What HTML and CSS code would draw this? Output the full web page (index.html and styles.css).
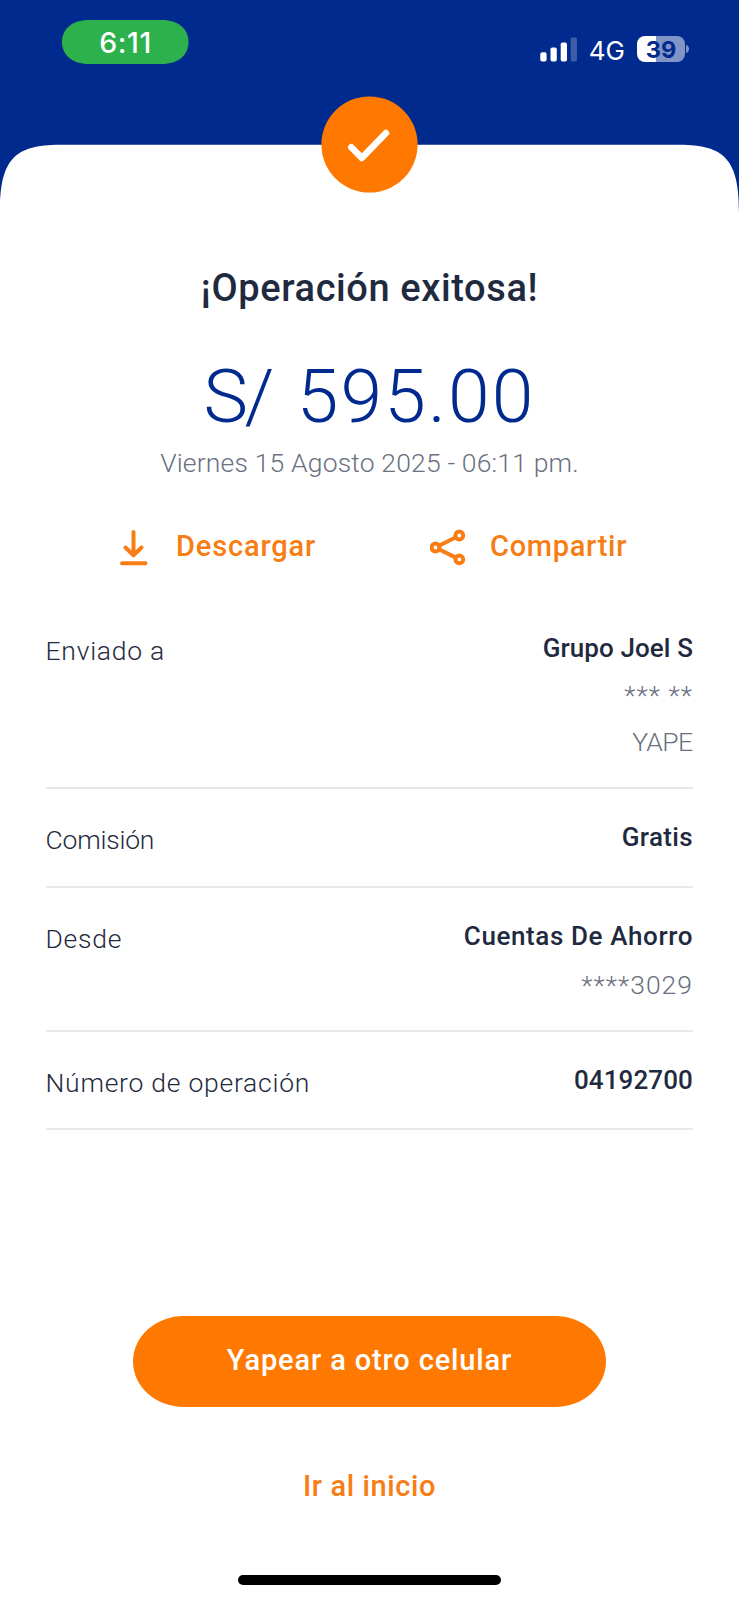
FILE: index.html
```
<!DOCTYPE html>
<html lang="es">
<head>
<meta charset="utf-8">
<title>Operación exitosa</title>
<link rel="stylesheet" href="styles.css">
</head>
<body>
<div class="screen">
  <header class="header">
    <svg class="header-shape" viewBox="0 0 739 216" aria-hidden="true">
      <path fill="#002a8d" d="M0 0H739V212C739 160 725 144.700 679 144.700H60C14 144.700 0 160 0 212Z"/>
    </svg>
    <div class="status">
      <svg class="pill" viewBox="0 0 127 44" aria-hidden="true"><path fill="#2db14c" d="M27 0H99.500C116.500 0 126.500 9 126.500 22S116.500 44 99.500 44H27C10 44 0 35 0 22S10 0 27 0Z"/></svg>
      <span class="time">6:11</span>
      <div class="indicators">
        <svg class="signal" viewBox="0 0 38 25" aria-hidden="true">
          <g fill="#fff"><rect x="0.300" y="15.300" width="6.300" height="9.200" rx="1.800"/><rect x="10.500" y="10.500" width="6.300" height="14" rx="1.800"/><rect x="20.700" y="5.500" width="6.300" height="19" rx="1.800"/></g>
          <rect x="30.700" y="0.500" width="6.300" height="24" rx="1.800" fill="#3d5da9"/>
        </svg>
        <span class="network">4G</span>
        <div class="battery"><span class="battery-body">39</span><svg class="battery-nub" viewBox="0 0 3 8" aria-hidden="true"><path fill="#7f94c6" d="M0 0C4 1 4 7 0 8Z"/></svg></div>
      </div>
    </div>
    <svg class="check" viewBox="0 0 97 97" aria-hidden="true">
      <circle cx="48.500" cy="48.500" r="48.100" fill="#ff7800"/>
      <path d="M30.300 51.300L40.800 62L65 37" fill="none" stroke="#fff" stroke-width="6.600" stroke-linecap="round" stroke-linejoin="round"/>
    </svg>
  </header>

  <main class="content">
    <h1 class="title">¡Operación exitosa!</h1>
    <p class="amount"><span class="currency">S</span>/ 595.00</p>
    <p class="date">Viernes 15 Agosto 2025 - 06:11 pm.</p>

    <div class="actions">
      <a class="action">
        <svg class="action-icon" viewBox="0 0 36 38" aria-hidden="true"><path d="M17.500 3V26M9.500 18.500L17.500 26.300L25.500 18.500M6 34.300H29.500" fill="none" stroke="#f77d14" stroke-width="4" stroke-linecap="round" stroke-linejoin="round"/></svg>
        <span class="descargar">Descargar</span>
      </a>
      <a class="action">
        <svg class="action-icon" viewBox="0 0 36 38" aria-hidden="true"><g fill="none" stroke="#f77d14" stroke-width="4"><circle cx="5.500" cy="18.500" r="3.900"/><circle cx="29.300" cy="6.500" r="3.900"/><circle cx="29.300" cy="30.300" r="3.900"/><path d="M9 16.700L25.800 8.300M9 20.200L25.800 28.600"/></g></svg>
        <span class="compartir">Compartir</span>
      </a>
    </div>

    <dl class="details">
      <div class="row">
        <dt class="label loose">Enviado a</dt>
        <dd class="values"><strong class="value">Grupo Joel S</strong><span class="sub stars">*** **</span><span class="sub bank">YAPE</span></dd>
      </div>
      <div class="row">
        <dt class="label">Comisión</dt>
        <dd class="values"><strong class="value gratis">Gratis</strong></dd>
      </div>
      <div class="row">
        <dt class="label loose">Desde</dt>
        <dd class="values account"><strong class="value cuentas">Cuentas De Ahorro</strong><span class="sub stars">****3029</span></dd>
      </div>
      <div class="row last">
        <dt class="label loose">Número de operación</dt>
        <dd class="values"><strong class="value">04192700</strong></dd>
      </div>
    </dl>

    <a class="primary">Yapear a otro celular</a>
    <a class="link">Ir al inicio</a>
    <div class="home-bar"></div>
  </main>
</div>
</body>
</html>
```
FILE: styles.css
```
* { box-sizing: border-box; }

body {
  margin: 0;
  background: #fff;
  font-family: Roboto, "Noto Sans", sans-serif;
  color: #1f2a40;
}

.screen {
  width: 739px;
  height: 1600px;
  overflow: hidden;
}

/* Header */
.header {
  position: relative;
  display: grid;
  height: 216px;
}

.header-shape {
  grid-area: 1 / 1;
  display: block;
  width: 739px;
  height: 216px;
}

.status {
  grid-area: 1 / 1;
  z-index: 1;
  display: grid;
  grid-template-columns: 127px 1fr;
  align-items: start;
  padding: 20px 50px 0 62px;
  font-family: Inter, sans-serif;
  color: #fff;
}

.pill {
  grid-area: 1 / 1;
  width: 127px;
  height: 44px;
}

.time {
  grid-area: 1 / 1;
  font-size: 28.5px;
  font-weight: 500;
  line-height: 46px;
  letter-spacing: 0.6px;
  text-align: center;
}

.indicators {
  display: flex;
  align-items: center;
  justify-content: flex-end;
  height: 26px;
  margin-top: 16px;
}

.signal {
  width: 38px;
  height: 25px;
  margin-top: 1px;
}

.network {
  margin: 3px 12px 0 11px;
  font-size: 26px;
  line-height: 26px;
}

.battery {
  display: flex;
  align-items: center;
}

.battery-body {
  width: 48px;
  height: 26px;
  border-radius: 8px;
  background: linear-gradient(90deg, #fff 19px, #8094c6 19px);
  color: #002a8d;
  font-size: 23.5px;
  font-weight: 700;
  line-height: 27px;
  text-align: center;
}

.battery-nub {
  width: 3px;
  height: 8px;
  margin-left: 1px;
}

.check {
  position: absolute;
  top: 96.3px;
  left: 320.5px;
  width: 97px;
  height: 97px;
}

/* Result */
.content {
  display: flex;
  flex-direction: column;
  align-items: center;
  padding-top: 47px;
}

.title {
  margin: 0;
  font-size: 38px;
  font-weight: 500;
  line-height: 50px;
  letter-spacing: 0.6px;
}

.amount {
  margin: 43px 0 0;
  color: #002a8d;
  font-size: 75px;
  font-weight: 300;
  line-height: 80px;
  letter-spacing: 2.1px;
}

.currency { letter-spacing: -3.5px; }

.date {
  margin: 9px 0 0;
  color: #697080;
  font-size: 26.5px;
  font-weight: 350;
  line-height: 36px;
  letter-spacing: 0.17px;
}

.actions {
  display: grid;
  grid-template-columns: 314px 1fr;
  width: 100%;
  margin-top: 45px;
  padding-left: 116px;
}

.action {
  display: flex;
  align-items: flex-start;
  gap: 24px;
  color: #f77d14;
  font-size: 29px;
  font-weight: 500;
  line-height: 40px;
}

.action-icon {
  width: 36px;
  height: 38px;
  margin-top: 3px;
}

.descargar { letter-spacing: 0.85px; }
.compartir { letter-spacing: 0.7px; }

/* Details */
.details {
  width: 647px;
  margin: 32.5px 0 0;
}

.row {
  display: flex;
  justify-content: space-between;
  padding: 30px 0 27px;
  border-bottom: 2px solid #e8e8ea;
}

.label {
  padding: 3px 0 1px;
  margin-left: -0.5px;
  font-size: 26.5px;
  font-weight: 350;
  line-height: 36px;
  letter-spacing: -0.2px;
}

.loose { letter-spacing: 0.75px; }

.values {
  display: flex;
  flex-direction: column;
  align-items: flex-end;
  gap: 11px;
  margin: 0;
}

.account { gap: 13px; }

.value {
  font-size: 26px;
  font-weight: 500;
  line-height: 36px;
  letter-spacing: 0.1px;
}

.gratis { letter-spacing: 0.35px; }
.cuentas { letter-spacing: 0.6px; }

.sub {
  color: #697080;
  font-size: 26.5px;
  font-weight: 350;
  line-height: 36px;
}

.stars { letter-spacing: 1px; }

.bank {
  margin-right: 0.5px;
  letter-spacing: -0.6px;
}

.last .label { padding-bottom: 0; }

/* Footer actions */
.primary {
  width: 473px;
  height: 91px;
  margin-top: 186.5px;
  border-radius: 51px / 45.5px;
  background: #ff7800;
  color: #fff;
  font-size: 29px;
  font-weight: 500;
  line-height: 89px;
  letter-spacing: 0.86px;
  text-align: center;
}

.link {
  margin-top: 58.5px;
  color: #f77d14;
  font-size: 29px;
  font-weight: 500;
  line-height: 40px;
  letter-spacing: 0.6px;
}

.home-bar {
  width: 263px;
  height: 10px;
  margin-top: 69px;
  border-radius: 5px;
  background: #000;
}
```
